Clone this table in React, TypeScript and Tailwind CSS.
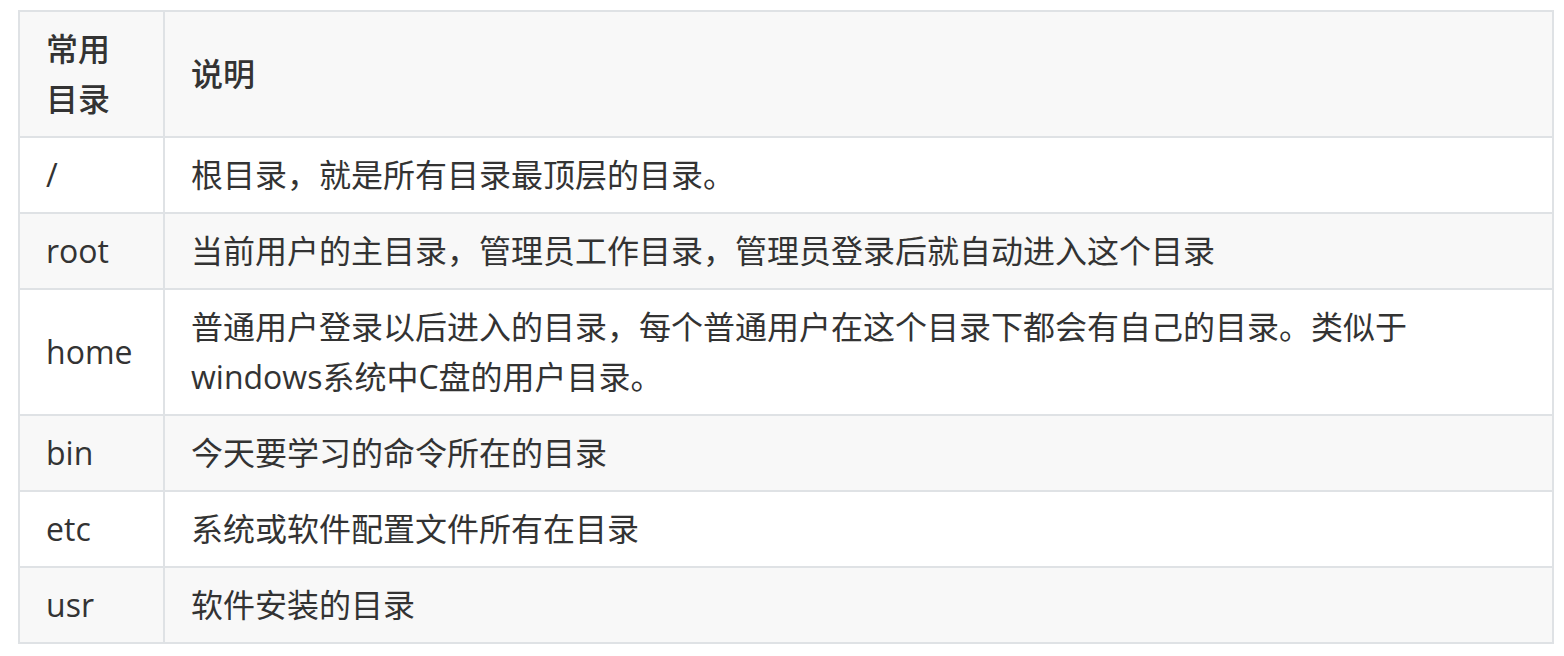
import React from 'react';

interface DirRow {
    name: string;
    desc: string;
}

const rows: DirRow[] = [
    { name: '/', desc: '根目录，就是所有目录最顶层的目录。' },
    { name: 'root', desc: '当前用户的主目录，管理员工作目录，管理员登录后就自动进入这个目录' },
    { name: 'home', desc: '普通用户登录以后进入的目录，每个普通用户在这个目录下都会有自己的目录。类似于windows系统中C盘的用户目录。' },
    { name: 'bin', desc: '今天要学习的命令所在的目录' },
    { name: 'etc', desc: '系统或软件配置文件所有在目录' },
    { name: 'usr', desc: '软件安装的目录' },
];

const App: React.FC = () => {
    return (
        <div
            className="min-h-screen bg-white pt-[10px] pl-[18px] text-[#333333]"
            style={{ fontFamily: "'Open Sans', 'Noto Sans CJK SC', sans-serif" }}
        >
            <table className="w-[1536px] table-fixed border-collapse text-[32px] leading-[50px]">
                <colgroup>
                    <col className="w-[145px]" />
                    <col />
                </colgroup>
                <thead>
                    <tr className="bg-[#f8f8f8]">
                        <th className="border-2 border-[#dfe2e5] px-[26px] py-[12px] text-left font-medium">常用目录</th>
                        <th className="border-2 border-[#dfe2e5] px-[26px] py-[12px] text-left font-medium">说明</th>
                    </tr>
                </thead>
                <tbody>
                    {rows.map((row, i) => (
                        <tr key={row.name} className={i % 2 === 1 ? 'bg-[#f8f8f8]' : 'bg-white'}>
                            <td className="border-2 border-[#dfe2e5] px-[26px] py-[12px]">{row.name}</td>
                            <td className="border-2 border-[#dfe2e5] px-[26px] py-[12px]">{row.desc}</td>
                        </tr>
                    ))}
                </tbody>
            </table>
        </div>
    );
};

export default App;
